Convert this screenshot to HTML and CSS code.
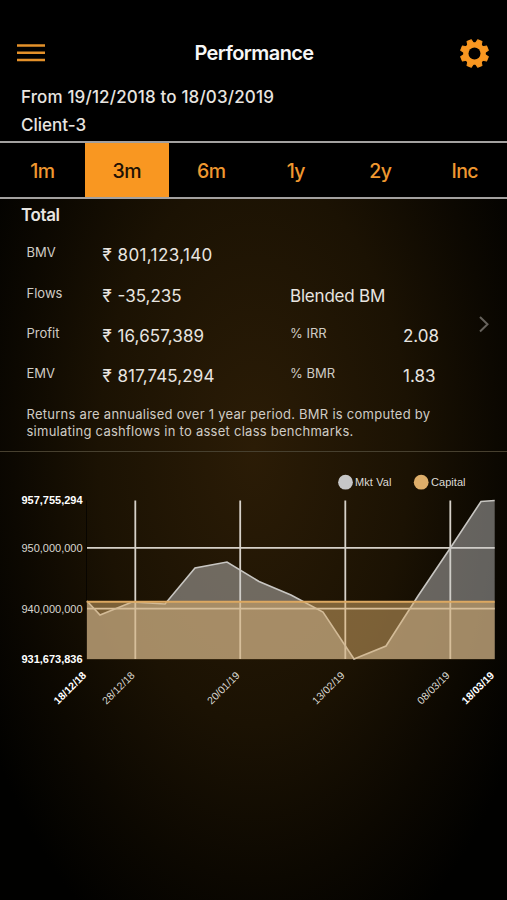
FILE: index.html
```html
<!DOCTYPE html>
<html lang="en">
<head>
<meta charset="utf-8">
<title>Performance</title>
<link rel="stylesheet" href="styles.css">
</head>
<body>
<main class="app">
  <header class="top">
    <div class="bar">
      <svg class="menu" viewBox="0 0 28 20" aria-hidden="true"><path d="M0 2.500H28M0 9.800H28M0 17H28"/></svg>
      <h1 class="title">Performance</h1>
      <svg class="gear" viewBox="-14.5 -14.5 29 29" aria-hidden="true">
        <g class="teeth">
          <path d="M-3.300 -9L-2.300 -14H2.300L3.300 -9V9L2.300 14H-2.300L-3.300 9Z" transform="rotate(22.500)"/>
          <path d="M-3.300 -9L-2.300 -14H2.300L3.300 -9V9L2.300 14H-2.300L-3.300 9Z" transform="rotate(67.500)"/>
          <path d="M-3.300 -9L-2.300 -14H2.300L3.300 -9V9L2.300 14H-2.300L-3.300 9Z" transform="rotate(112.500)"/>
          <path d="M-3.300 -9L-2.300 -14H2.300L3.300 -9V9L2.300 14H-2.300L-3.300 9Z" transform="rotate(157.500)"/>
        </g>
        <circle r="11.300"/>
        <circle class="hole" r="6"/>
      </svg>
    </div>
    <p class="meta period">From 19/12/2018 to 18/03/2019</p>
    <p class="meta client">Client-3</p>
  </header>
  <nav class="tabs">
    <span class="tab">1m</span><span class="tab active">3m</span><span class="tab">6m</span><span class="tab">1y</span><span class="tab">2y</span><span class="tab">Inc</span>
  </nav>
  <section class="summary">
    <h2 class="total">Total</h2>
    <div class="body">
      <div class="grid">
        <span class="label">BMV</span><span class="value loose"><span class="cur">₹</span>801,123,140</span><span></span><span></span>
        <span class="label">Flows</span><span class="value"><span class="cur">₹</span>-35,235</span><span class="value bench">Blended BM</span>
        <span class="label">Profit</span><span class="value wide"><span class="cur">₹</span>16,657,389</span><span class="label">% IRR</span><span class="value">2.08</span>
        <span class="label">EMV</span><span class="value wide"><span class="cur">₹</span>817,745,294</span><span class="label">% BMR</span><span class="value">1.83</span>
      </div>
      <svg class="chevron" viewBox="0 0 12 18" aria-hidden="true"><path d="M1 2L8.500 9.300L1 16.500"/></svg>
    </div>
    <p class="note">Returns are annualised over 1 year period. BMR is computed by<br>simulating cashflows in to asset class benchmarks.</p>
  </section>
  <svg class="chart" viewBox="0 452 507 270">
    <circle class="dot-market" cx="345.5" cy="482.2" r="7.4"/>
    <text class="legend" x="355" y="486" textLength="36.500">Mkt Val</text>
    <circle class="dot-capital" cx="421.2" cy="482.2" r="7.4"/>
    <text class="legend" x="431" y="486" textLength="34.500">Capital</text>
    <path class="axis" d="M86.500 500.500V659"/>
    <path class="gridline" d="M135.300 500.500V659M240.200 500.500V659M345.300 500.500V659M450.300 500.500V659M87 547.800H494.700M87 608.700H494.700"/>
    <path class="market-area" d="M87 601L100 615L132 602L165 604L195 568L227 562L259 581.500L291 595L323 612L354 659L386 646L418 596L450 548.500L481 501.500L494.700 500.500V659H87Z"/>
    <path class="market-line" d="M87 601L100 615L132 602L165 604L195 568L227 562L259 581.500L291 595L323 612L354 659L386 646L418 596L450 548.500L481 501.500L494.700 500.500"/>
    <path class="capital-area" d="M86.700 601.800H494.700V659.300H86.700Z"/>
    <path class="capital-line" d="M86.700 601.800H494.700"/>
    <g class="tick y">
      <text class="edge" x="21.500" y="504.300" textLength="61">957,755,294</text>
      <text x="21.500" y="551.600" textLength="61">950,000,000</text>
      <text x="21.500" y="612.600" textLength="61">940,000,000</text>
      <text class="edge" x="21.500" y="663" textLength="61">931,673,836</text>
    </g>
    <g class="tick x">
      <text class="edge" transform="translate(87 676) rotate(-45)">18/12/18</text>
      <text transform="translate(135.500 676) rotate(-45)">28/12/18</text>
      <text transform="translate(240.500 676) rotate(-45)">20/01/19</text>
      <text transform="translate(345.500 676) rotate(-45)">13/02/19</text>
      <text transform="translate(450.500 676) rotate(-45)">08/03/19</text>
      <text class="edge" transform="translate(495 676) rotate(-45)">18/03/19</text>
    </g>
  </svg>
</main>
</body>
</html>
```
FILE: styles.css
```css
* { box-sizing: border-box; }
body { margin: 0; background: #000; font-family: Inter, "Liberation Sans", sans-serif; color: #e8e5e0; }
h1, h2, p { margin: 0; }
.app { width: 507px; height: 900px; overflow: hidden; background: radial-gradient(ellipse 310px 550px at 254px 450px, #2b1c06 0%, #1b1203 50%, #0c0801 78%, #010100 100%); }
.top { height: 141px; padding-top: 36px; background: #000; }
.bar { display: grid; grid-template-columns: 28px 1fr 29px; align-items: center; height: 34px; padding: 0 18px 0 17px; }
.menu { width: 28px; height: 20px; fill: none; stroke: #e4912a; stroke-width: 2.4; overflow: visible; }
.gear { width: 29px; height: 29px; fill: #f99721; }
.teeth { stroke: #f99721; stroke-width: 1; stroke-linejoin: round; }
.hole { fill: #000; }
.title { padding-left: 3px; text-align: center; font-size: 20px; line-height: 32px; font-weight: 600; letter-spacing: -.6px; color: #f7f7f7; }
.meta { padding-left: 21px; font-size: 17px; line-height: 28px; font-weight: 500; }
.period { margin-top: 13px; letter-spacing: .14px; }
.tabs { display: grid; grid-template-columns: repeat(6, 1fr); height: 58px; background: #000; border-top: 2px solid #a3a1a0; border-bottom: 2px solid #a3a1a0; }
.tab { display: flex; align-items: center; justify-content: center; padding: 2px 0 0 0; font-size: 19.500px; font-weight: 500; letter-spacing: -.6px; color: #ef9830; }
.active { background: #f99721; color: #201104; }
.summary { height: 253px; border-bottom: 1px solid #47402f; }
.total { padding: 4px 0 0 21px; font-size: 17px; line-height: 24px; font-weight: 600; letter-spacing: -.4px; }
.body { display: flex; align-items: center; height: 162px; margin-top: 8px; padding-left: 26.500px; }
.grid { display: grid; grid-template-columns: 76px 187.500px 113px 76px; grid-template-rows: repeat(4, 40.300px); }
.label { font-size: 13px; line-height: 34px; color: #d0ccc5; }
.value { font-size: 17px; line-height: 40.300px; white-space: nowrap; }
.loose { letter-spacing: .38px; }
.wide { letter-spacing: .1px; }
.cur { display: inline-block; width: 15px; }
.bench { grid-column: span 2; letter-spacing: -.2px; }
.chevron { width: 12px; height: 18px; margin-top: 16px; fill: none; stroke: #66625c; stroke-width: 2; }
.note { padding: 9px 0 0 26.500px; font-size: 13px; line-height: 17.300px; letter-spacing: .26px; color: #d0ccc5; white-space: nowrap; }
.chart { display: block; width: 507px; height: 270px; font-family: "Liberation Sans", Arial, sans-serif; }
.dot-market { fill: #c6c6c7; }
.dot-capital { fill: #deae6a; }
.legend { font-size: 11px; fill: #dedbd6; }
.axis { stroke: #080500; stroke-width: 1; }
.gridline { fill: none; stroke: #d6d1c9; stroke-width: 1.800; }
.market-area { fill: #c8c8c8; fill-opacity: .47; }
.market-line { fill: none; stroke: #c8c6c2; stroke-width: 1.600; }
.capital-area { fill: #deb06c; fill-opacity: .5; }
.capital-line { fill: none; stroke: #dca861; stroke-width: 2; }
.tick { font-size: 11px; fill: #d9d6d0; }
.tick .edge { font-weight: 700; fill: #fff; }
.x { font-size: 10.500px; }
.x text { text-anchor: end; }
```
